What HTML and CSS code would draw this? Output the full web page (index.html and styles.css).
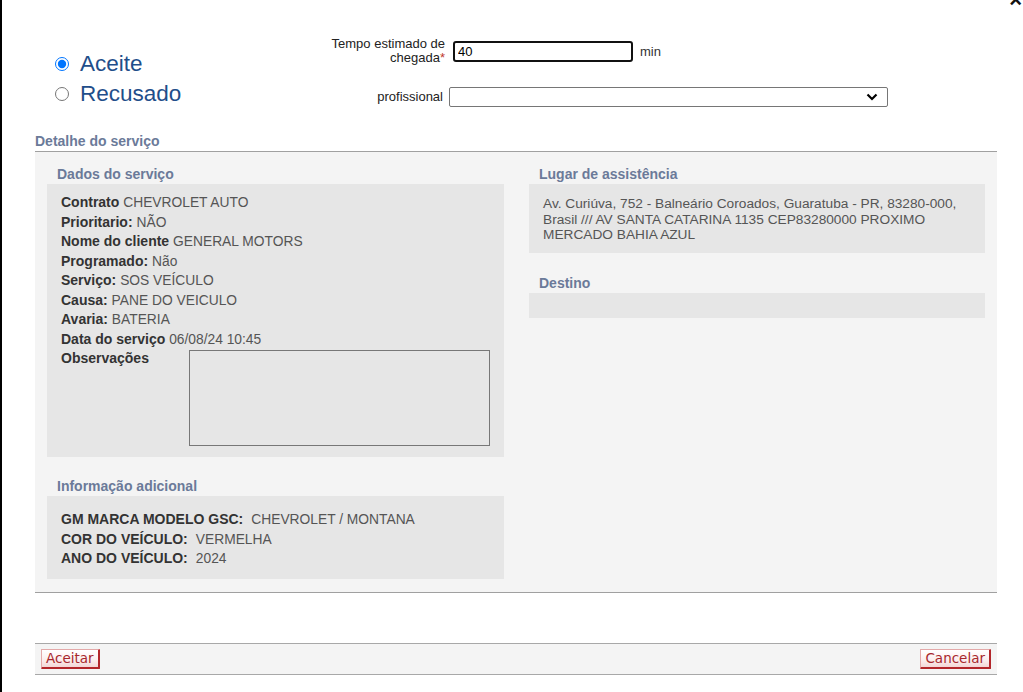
FILE: index.html
```html
<!DOCTYPE html>
<html lang="pt">
<head>
<meta charset="utf-8">
<title>Detalhe do serviço</title>
<link rel="stylesheet" href="styles.css">
</head>
<body>
<div class="dialog">
  <span class="close">×</span>
  <div class="top">
    <div class="choice">
      <label class="opt"><input type="radio" name="resp" checked><span>Aceite</span></label>
      <label class="opt"><input type="radio" name="resp"><span>Recusado</span></label>
    </div>
    <div class="fields">
      <div class="frow">
        <div class="flabel w1">Tempo estimado de chegada<span class="req">*</span></div>
        <input class="tinput" type="text" value="40">
        <span class="unit">min</span>
      </div>
      <div class="frow r2">
        <div class="flabel w2">profissional</div>
        <select class="sel"><option></option></select>
      </div>
    </div>
  </div>

  <div class="section-title">Detalhe do serviço</div>
  <div class="panel">
    <div class="col">
      <div class="sub">Dados do serviço</div>
      <div class="box data">
        <div class="line"><b>Contrato</b> <span class="v">CHEVROLET AUTO</span></div>
        <div class="line"><b>Prioritario:</b> <span class="v">NÃO</span></div>
        <div class="line"><b>Nome do cliente</b> <span class="v">GENERAL MOTORS</span></div>
        <div class="line"><b>Programado:</b> <span class="v">Não</span></div>
        <div class="line"><b>Serviço:</b> <span class="v">SOS VEÍCULO</span></div>
        <div class="line"><b>Causa:</b> <span class="v">PANE DO VEICULO</span></div>
        <div class="line"><b>Avaria:</b> <span class="v">BATERIA</span></div>
        <div class="line"><b>Data do serviço</b> <span class="v">06/08/24 10:45</span></div>
        <div class="obs">
          <b class="obs-label">Observações</b>
          <textarea class="obs-text"></textarea>
        </div>
      </div>
      <div class="sub gap">Informação adicional</div>
      <div class="box info">
        <div class="line"><b>GM MARCA MODELO GSC:</b><span class="v sp">CHEVROLET / MONTANA</span></div>
        <div class="line"><b>COR DO VEÍCULO:</b><span class="v sp">VERMELHA</span></div>
        <div class="line"><b>ANO DO VEÍCULO:</b><span class="v sp">2024</span></div>
      </div>
    </div>
    <div class="col">
      <div class="sub">Lugar de assistência</div>
      <div class="box addr">Av. Curiúva, 752 - Balneário Coroados, Guaratuba - PR, 83280-000, Brasil /// AV SANTA CATARINA 1135 CEP83280000 PROXIMO MERCADO BAHIA AZUL</div>
      <div class="sub gap2">Destino</div>
      <div class="box dest"></div>
    </div>
  </div>

  <div class="footer">
    <button class="btn">Aceitar</button>
    <button class="btn">Cancelar</button>
  </div>
</div>
</body>
</html>
```

FILE: styles.css
```css
* { box-sizing: border-box; }
html, body { margin: 0; padding: 0; background: #fff; }
body { font-family: "Liberation Sans", Arial, sans-serif; color: #333; }

.dialog {
  position: relative;
  height: 692px;
  border-left: 2px solid #000;
  overflow: hidden;
}

.close {
  position: absolute;
  top: -11px;
  right: 1px;
  font-size: 22px;
  font-weight: bold;
  color: #111;
  line-height: 22px;
}

.top { display: flex; height: 108px; }
.choice { width: 298px; padding: 49px 0 0 53px; }
.opt {
  display: flex;
  align-items: center;
  height: 30px;
  font-size: 22.5px;
  color: #1f4e8a;
}
.opt input {
  margin: 0 11px 0 0;
  width: 14px;
  height: 14px;
}

.fields { padding-top: 37px; font-size: 13px; color: #222; }
.frow { display: flex; align-items: center; }
.frow.r2 { margin-top: 22px; }
.flabel { text-align: right; line-height: 14px; }
.w1 { width: 145px; padding-left: 20px; margin-right: 2px; }
.w2 { width: 143px; }
.req { color: #c0392b; }
.tinput {
  margin-left: 6px;
  width: 180px;
  height: 21px;
  border: 2px solid #111;
  border-radius: 3px;
  padding: 0 3px;
  font: 13px "Liberation Sans", Arial, sans-serif;
  color: #000;
  outline: none;
}
.unit { margin-left: 7px; color: #333; }
.sel {
  margin-left: 6px;
  width: 439px;
  height: 20px;
  border: 1px solid #767676;
  border-radius: 2px;
  background: #fff url("data:image/svg+xml;utf8,<svg xmlns='http://www.w3.org/2000/svg' width='12' height='8' viewBox='0 0 12 8'><path d='M1.5 1.5 L6 6 L10.5 1.5' fill='none' stroke='black' stroke-width='2.2'/></svg>") no-repeat right 9px center;
  appearance: none;
  -webkit-appearance: none;
}

.section-title {
  margin: 25px 26px 0 33px;
  height: 19px;
  line-height: 17px;
  font-size: 14px;
  font-weight: bold;
  color: #6b7a99;
  border-bottom: 1px solid #a0a0a0;
}

.panel {
  margin: 0 26px 0 33px;
  background: #f4f4f4;
  padding: 12px 12px 13px;
  border-bottom: 1px solid #a0a0a0;
  display: grid;
  grid-template-columns: 457px 456px;
  column-gap: 25px;
  align-items: start;
}

.sub {
  height: 19px;
  line-height: 20px;
  margin-bottom: 1px;
  padding-left: 10px;
  font-size: 14px;
  font-weight: bold;
  color: #6b7a99;
}
.sub.gap { margin-top: 19px; }
.sub.gap2 { margin-top: 20px; }

.box { background: #e6e6e6; }
.line { line-height: 19.5px; font-size: 14px; white-space: nowrap; }
.line b { color: #333; }
.v { color: #555; font-size: 13.8px; }
.v.sp { margin-left: 8px; }

.data { height: 273px; padding: 9px 14px 0 14px; }
.obs { display: flex; align-items: flex-start; }
.obs-label { width: 128px; font-size: 14px; line-height: 19.5px; color: #333; }
.obs-text {
  margin-top: 1px;
  width: 301px;
  height: 96px;
  border: 1px solid #777;
  background: transparent;
  resize: none;
}

.info { height: 83px; padding: 14px 14px 0 14px; }

.addr {
  height: 69px;
  padding: 12px 14px 0 14px;
  font-size: 13.7px;
  line-height: 15.5px;
  color: #555;
}
.dest { height: 25px; }

.footer {
  margin: 50px 26px 0 33px;
  height: 32px;
  background: #f4f4f4;
  border-top: 1px solid #a8a8a8;
  border-bottom: 1px solid #a8a8a8;
  display: flex;
  justify-content: space-between;
  align-items: flex-start;
  padding: 5px 6px 0;
}
.btn {
  height: 20px;
  padding: 0 4px;
  font: 13.5px "DejaVu Sans", Verdana, sans-serif;
  line-height: 17px;
  color: #a8282d;
  background: linear-gradient(#ffffff, #fbeeee 60%, #f3d6d6);
  border-style: solid;
  border-width: 1px 2px 2px 1px;
  border-color: #e3a9a9 #b3262b #b3262b #e3a9a9;
  border-radius: 1px;
}
```
